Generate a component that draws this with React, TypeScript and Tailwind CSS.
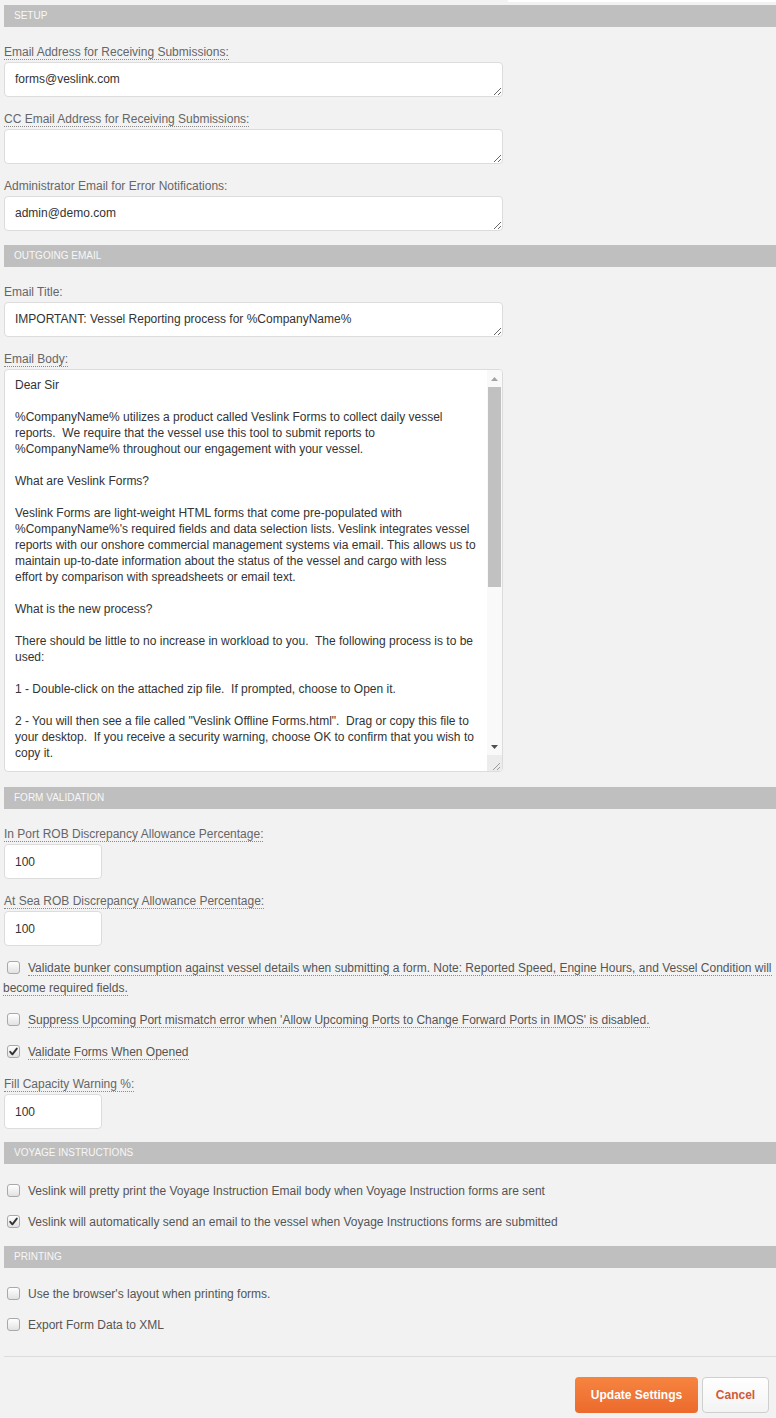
import clsx from 'clsx';
import { FC, ReactNode } from 'react';

const EMAIL_BODY = [
  'Dear Sir',
  '',
  '%CompanyName% utilizes a product called Veslink Forms to collect daily vessel',
  'reports.  We require that the vessel use this tool to submit reports to',
  '%CompanyName% throughout our engagement with your vessel.',
  '',
  'What are Veslink Forms?',
  '',
  'Veslink Forms are light-weight HTML forms that come pre-populated with',
  "%CompanyName%'s required fields and data selection lists. Veslink integrates vessel",
  'reports with our onshore commercial management systems via email. This allows us to',
  'maintain up-to-date information about the status of the vessel and cargo with less',
  'effort by comparison with spreadsheets or email text.',
  '',
  'What is the new process?',
  '',
  'There should be little to no increase in workload to you.  The following process is to be',
  'used:',
  '',
  '1 - Double-click on the attached zip file.  If prompted, choose to Open it.',
  '',
  '2 - You will then see a file called "Veslink Offline Forms.html".  Drag or copy this file to',
  'your desktop.  If you receive a security warning, choose OK to confirm that you wish to',
  'copy it.',
].join('\n');

const SectionHeader: FC<{ title: string; className?: string }> = ({
  title,
  className,
}) => (
  <div
    className={clsx(
      'h-[22px] bg-[#bfbfbf] pl-[10px] text-[10px] leading-[22px] uppercase text-[#f7f7f7]',
      className,
    )}
  >
    {title}
  </div>
);

const FieldLabel: FC<{
  children: ReactNode;
  dotted?: boolean;
  className?: string;
}> = ({ children, dotted, className }) => (
  <div className={clsx('mb-[2px] flex h-[15px] items-start', className)}>
    <span
      className={clsx(
        'block h-[15px] text-[12px] leading-[14px] text-[#666]',
        dotted && 'border-b border-dotted border-[#8a8a8a]',
      )}
    >
      {children}
    </span>
  </div>
);

const TextBox: FC<{ value?: string; wide?: boolean }> = ({
  value = '',
  wide = true,
}) =>
  wide ? (
    <textarea
      readOnly
      defaultValue={value}
      rows={1}
      className="block h-[35px] w-[499px] overflow-hidden rounded-[4px] border border-[#dcdcdc] bg-white px-[10px] py-[8px] text-[12px] leading-[16px] text-[#333] outline-none"
    />
  ) : (
    <input
      readOnly
      defaultValue={value}
      className="block h-[35px] w-[98px] rounded-[4px] border border-[#dcdcdc] bg-white px-[10px] text-[12px] text-[#333] outline-none"
    />
  );

const CheckBox: FC<{ checked?: boolean }> = ({ checked }) => (
  <span className="relative mr-[8px] ml-[4px] inline-block h-[13px] w-[13px] align-[-2px] rounded-[3px] border border-[#a9a9a9] bg-linear-to-b from-white to-[#e2e2e2]">
    {checked && (
      <svg
        viewBox="0 0 13 13"
        className="absolute -top-px -left-px h-[13px] w-[13px]"
      >
        <path
          d="M3.2 6.8 L5.4 9.3 L9.8 3.6"
          fill="none"
          stroke="#333"
          strokeWidth="1.9"
          strokeLinecap="round"
          strokeLinejoin="round"
        />
      </svg>
    )}
  </span>
);

const CheckRow: FC<{
  label: string;
  checked?: boolean;
  dotted?: boolean;
  className?: string;
}> = ({ label, checked, dotted, className }) => (
  <div
    className={clsx('-ml-px text-[12px] leading-[20px] text-[#555]', className)}
  >
    <CheckBox checked={checked} />
    <span className={clsx(dotted && 'border-b border-dotted border-[#8a8a8a]')}>
      {label}
    </span>
  </div>
);

const EmailBody: FC = () => (
  <div className="flex h-[403px] w-[499px] overflow-hidden rounded-[4px] border border-[#dcdcdc] bg-white">
    <div className="flex-1 overflow-hidden pt-[7px] pl-[10px] text-[12px] leading-[16px] whitespace-pre text-[#333]">
      {EMAIL_BODY}
    </div>
    <div className="flex w-[15px] flex-col bg-[#f9f9f9]">
      <div className="flex h-[17px] items-center justify-center">
        <svg width="7" height="4" viewBox="0 0 7 4">
          <polygon points="0,4 3.5,0 7,4" fill="#a3a3a3" />
        </svg>
      </div>
      <div className="mx-px h-[200px] bg-[#c1c1c1]" />
      <div className="flex-1" />
      <div className="flex h-[17px] items-center justify-center">
        <svg width="7" height="4" viewBox="0 0 7 4">
          <polygon points="0,0 7,0 3.5,4" fill="#505050" />
        </svg>
      </div>
      <div className="h-[16px] bg-[#ececec]">
        <svg width="15" height="16" viewBox="0 0 15 16">
          <line x1="13" y1="8" x2="6" y2="15" stroke="#9a9a9a" strokeWidth="1" />
          <line x1="13" y1="12" x2="10" y2="15" stroke="#9a9a9a" strokeWidth="1" />
        </svg>
      </div>
    </div>
  </div>
);

export default function App() {
  return (
    <div className="min-h-[1418px] w-[776px] bg-[#f2f2f2] font-['Liberation_Sans',Arial,sans-serif]">
      <div className="ml-[508px] h-[2px] bg-white" />
      <div className="pt-[3px] pb-[5px] pl-[4px]">
        <SectionHeader title="Setup" />

        <FieldLabel dotted className="mt-[18px]">
          Email Address for Receiving Submissions:
        </FieldLabel>
        <TextBox value="forms@veslink.com" />

        <FieldLabel dotted className="mt-[15px]">
          CC Email Address for Receiving Submissions:
        </FieldLabel>
        <TextBox />

        <FieldLabel className="mt-[15px]">
          Administrator Email for Error Notifications:
        </FieldLabel>
        <TextBox value="admin@demo.com" />

        <SectionHeader title="Outgoing Email" className="mt-[14px]" />

        <FieldLabel className="mt-[18px]">Email Title:</FieldLabel>
        <TextBox value="IMPORTANT: Vessel Reporting process for %CompanyName%" />

        <FieldLabel dotted className="mt-[15px]">
          Email Body:
        </FieldLabel>
        <EmailBody />

        <SectionHeader title="Form Validation" className="mt-[15px]" />

        <FieldLabel dotted className="mt-[18px]">
          In Port ROB Discrepancy Allowance Percentage:
        </FieldLabel>
        <TextBox value="100" wide={false} />

        <FieldLabel dotted className="mt-[15px]">
          At Sea ROB Discrepancy Allowance Percentage:
        </FieldLabel>
        <TextBox value="100" wide={false} />

        <CheckRow
          dotted
          className="mt-[12px]"
          label="Validate bunker consumption against vessel details when submitting a form. Note: Reported Speed, Engine Hours, and Vessel Condition will become required fields."
        />
        <CheckRow
          dotted
          className="mt-[12px]"
          label="Suppress Upcoming Port mismatch error when 'Allow Upcoming Ports to Change Forward Ports in IMOS' is disabled."
        />
        <CheckRow
          dotted
          checked
          className="mt-[12px]"
          label="Validate Forms When Opened"
        />

        <FieldLabel dotted className="mt-[15px]">
          Fill Capacity Warning %:
        </FieldLabel>
        <TextBox value="100" wide={false} />

        <SectionHeader title="Voyage Instructions" className="mt-[13px]" />

        <CheckRow
          className="mt-[17px]"
          label="Veslink will pretty print the Voyage Instruction Email body when Voyage Instruction forms are sent"
        />
        <CheckRow
          checked
          className="mt-[11px]"
          label="Veslink will automatically send an email to the vessel when Voyage Instructions forms are submitted"
        />

        <SectionHeader title="Printing" className="mt-[14px]" />

        <CheckRow
          className="mt-[16px]"
          label="Use the browser's layout when printing forms."
        />
        <CheckRow className="mt-[11px]" label="Export Form Data to XML" />

        <div className="mt-[21px] h-px bg-[#dcdcdc]" />

        <div className="mt-[20px] flex justify-end gap-[4px] pr-[7px]">
          <button
            type="button"
            className="h-[36px] w-[123px] rounded-[4px] bg-linear-to-b from-[#f6843f] to-[#ec6a2c] text-[12px] font-bold text-white"
          >
            Update Settings
          </button>
          <button
            type="button"
            className="h-[36px] w-[67px] rounded-[4px] border border-[#cfcfcf] bg-linear-to-b from-white to-[#f3f3f3] text-[12px] font-bold text-[#cf5a3c]"
          >
            Cancel
          </button>
        </div>
      </div>
    </div>
  );
}
